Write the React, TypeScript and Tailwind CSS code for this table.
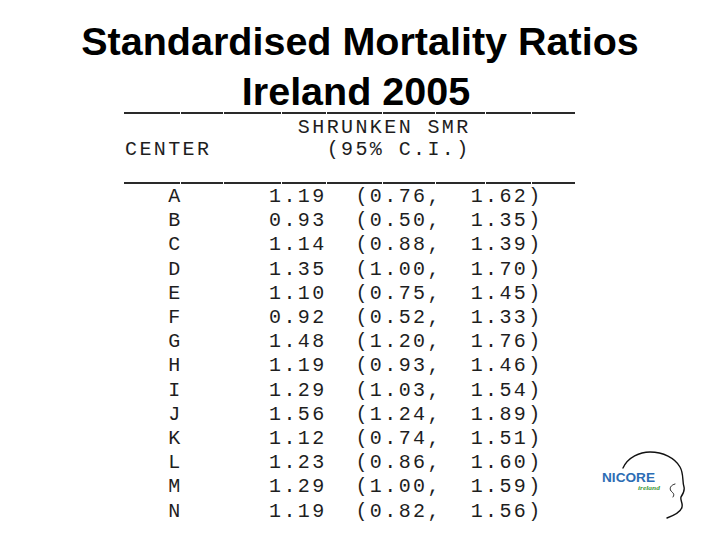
const rows: [string, string, string, string][] = [
  ['A', '1.19', '0.76', '1.62'],
  ['B', '0.93', '0.50', '1.35'],
  ['C', '1.14', '0.88', '1.39'],
  ['D', '1.35', '1.00', '1.70'],
  ['E', '1.10', '0.75', '1.45'],
  ['F', '0.92', '0.52', '1.33'],
  ['G', '1.48', '1.20', '1.76'],
  ['H', '1.19', '0.93', '1.46'],
  ['I', '1.29', '1.03', '1.54'],
  ['J', '1.56', '1.24', '1.89'],
  ['K', '1.12', '0.74', '1.51'],
  ['L', '1.23', '0.86', '1.60'],
  ['M', '1.29', '1.00', '1.59'],
  ['N', '1.19', '0.82', '1.56'],
];

const dashes = [56, 42, 57, 44, 55, 52, 49, 45, 43];

function DashLine() {
  return (
    <div className="flex gap-px h-[2px]">
      {dashes.map((w, i) => (
        <div key={i} className="h-full bg-[#2a2a2a]" style={{ width: w }} />
      ))}
    </div>
  );
}

function NicoreLogo() {
  return (
    <svg width="100" height="80" viewBox="0 0 100 80" className="shrink-0">
      {/* head outline */}
      <path
        d="M28,23 C33,12 45,7 55,7 C68,7 80,13 85,22 C89,29 87,36 89,42 C90,46 88,49 86,52 C85,55 88,58 87,62 C86,67 80,70 72,73"
        fill="none"
        stroke="#111"
        strokeWidth="1.4"
        strokeLinecap="round"
      />
      <path
        d="M80,39 C76,40 74,43 76,46 C78,48 80,49 78,52"
        fill="none"
        stroke="#222"
        strokeWidth="1"
        strokeLinecap="round"
      />
      <text
        x="7"
        y="37"
        fontFamily="'Liberation Sans', Arial, sans-serif"
        fontWeight="700"
        fontSize="12"
        fill="#2c6db4"
        textLength="53"
        lengthAdjust="spacingAndGlyphs"
      >
        NICORE
      </text>
      <text
        x="43"
        y="45"
        fontFamily="'Liberation Serif', serif"
        fontStyle="italic"
        fontWeight="700"
        fontSize="7"
        fill="#3f9a3c"
        textLength="22"
        lengthAdjust="spacingAndGlyphs"
      >
        ireland
      </text>
    </svg>
  );
}

export default function App() {
  return (
    <div className="w-[720px] h-[540px] bg-white overflow-hidden">
      <div className="h-[112px] pt-[16px] text-center font-['Liberation_Sans',Arial,sans-serif] font-bold text-[39.5px] leading-[50px] text-black">
        <div>Standardised Mortality Ratios</div>
        <div className="-ml-[8px]">Ireland 2005</div>
      </div>

      <div className="flex items-end">
        <div className="ml-[124px] w-[452px] font-['Liberation_Mono','Courier_New',monospace] text-[20px] tracking-[2.4px] text-[#1e1e1e] whitespace-pre">
          <DashLine />
          <div className="mt-[3px] pl-px leading-[22px]">
            <div>{'            SHRUNKEN SMR'}</div>
            <div>{'CENTER        (95% C.I.)'}</div>
          </div>
          <div className="mt-[21px]">
            <DashLine />
          </div>
          <div className="pt-px pl-px leading-[24.2px]">
            {rows.map(([c, smr, lo, hi]) => (
              <div key={c}>{`   ${c}      ${smr}  (${lo},  ${hi})`}</div>
            ))}
          </div>
        </div>
        <div className="ml-[19px] mb-[-1px]">
          <NicoreLogo />
        </div>
      </div>
    </div>
  );
}
